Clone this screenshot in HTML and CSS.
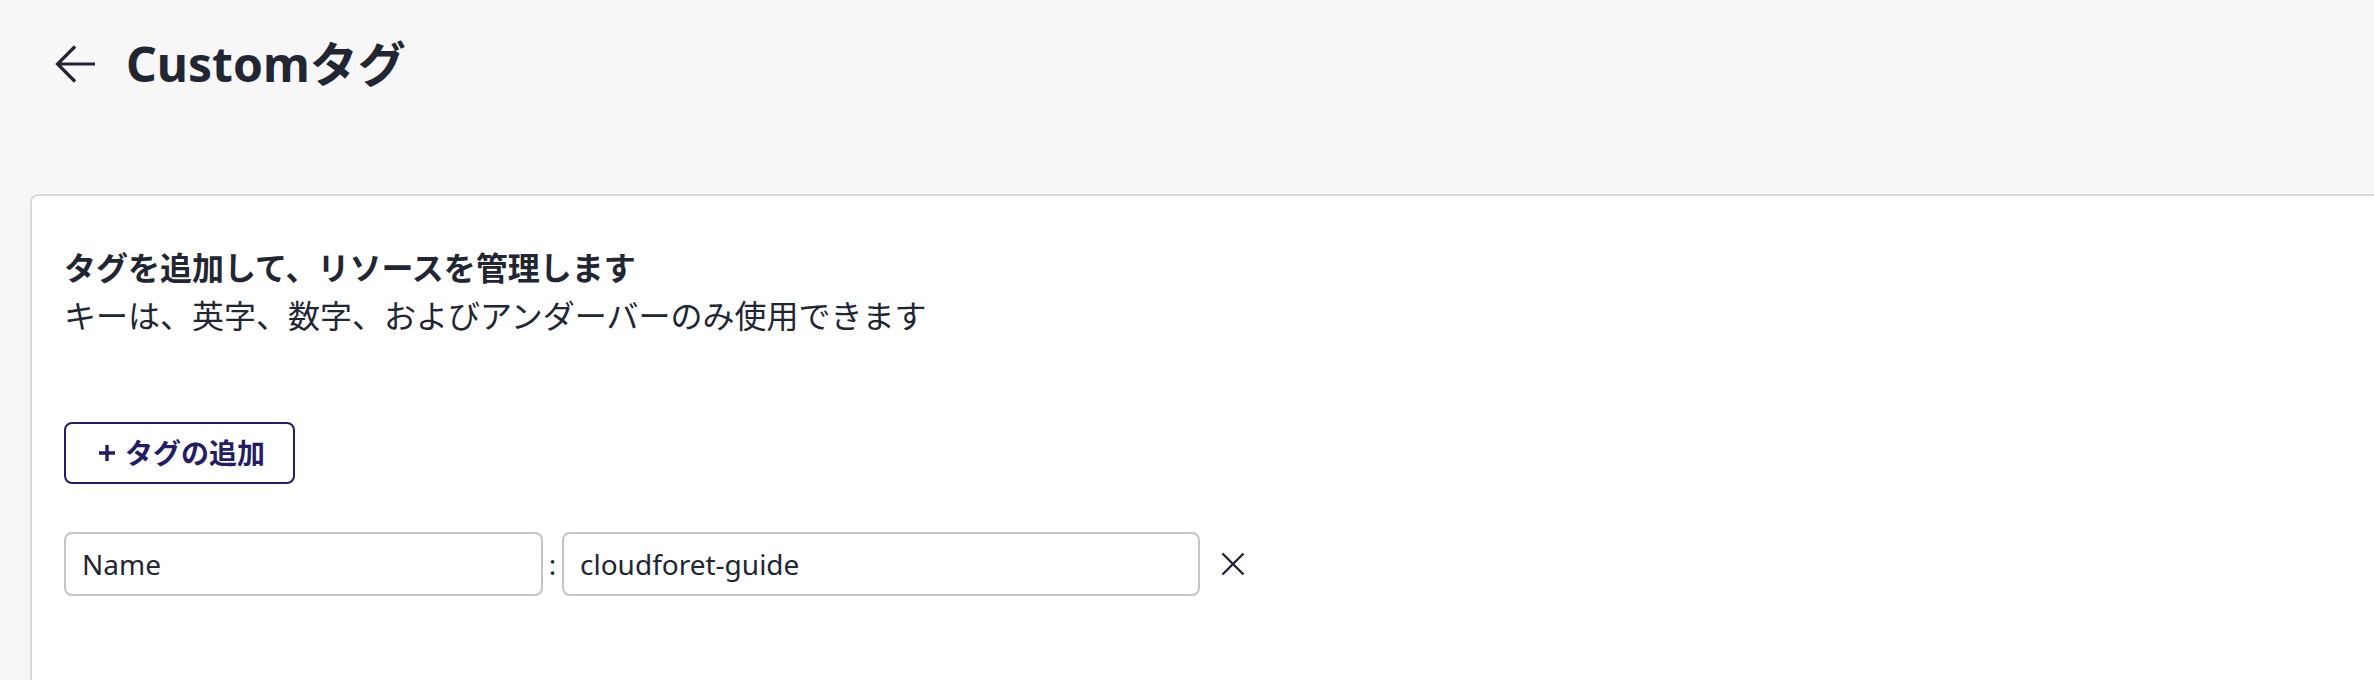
FILE: index.html
```html
<!DOCTYPE html>
<html lang="ja">
<head>
<meta charset="utf-8">
<title>Customタグ</title>
<link rel="stylesheet" href="styles.css">
</head>
<body>
<header class="page-header">
  <button class="back-btn" aria-label="戻る">
    <svg class="back-icon" width="44" height="40" viewBox="0 0 44 40">
      <path d="M2 20 H40 M20 2.5 L2.5 20 L20 37.5" fill="none" stroke="#222532" stroke-width="3.2"/>
    </svg>
  </button>
  <h1 class="page-title">Customタグ</h1>
</header>
<main class="card">
  <p class="help-title">タグを追加して、リソースを管理します</p>
  <p class="help-desc">キーは、英字、数字、およびアンダーバーのみ使用できます</p>
  <button class="add-btn">
    <svg class="plus-icon" width="16" height="16" viewBox="0 0 16 16">
      <path d="M8 0 V16 M0 8 H16" stroke="#251c64" stroke-width="3.4"/>
    </svg>
    <span>タグの追加</span>
  </button>
  <div class="tag-row">
    <input class="tag-input key" type="text" value="Name">
    <span class="colon">:</span>
    <input class="tag-input value" type="text" value="cloudforet-guide">
    <button class="delete-btn" aria-label="削除">
      <svg width="24" height="24" viewBox="0 0 24 24">
        <path d="M1.5 1.5 L22.5 22.5 M22.5 1.5 L1.5 22.5" stroke="#222532" stroke-width="2.4"/>
      </svg>
    </button>
  </div>
</main>
</body>
</html>
```

FILE: styles.css
```css
html, body {
  margin: 0;
  padding: 0;
  height: 100%;
  overflow: hidden;
}
body {
  background: #f7f7f7;
  font-family: "Noto Sans", "Noto Sans CJK JP", sans-serif;
  color: #222532;
}
.page-header {
  display: flex;
  align-items: center;
  height: 64px;
  padding: 32px 0 0 55px;
}
.back-btn {
  display: flex;
  align-items: center;
  padding: 0;
  margin: 0;
  border: none;
  background: none;
  cursor: pointer;
}
.back-icon {
  display: block;
}
.page-title {
  margin: 0 0 0 27px;
  font-size: 48px;
  font-weight: 700;
  line-height: 64px;
  color: #222532;
}
.card {
  margin: 98px -40px 0 30px;
  height: 800px;
  background: #ffffff;
  border-top: 2px solid #d9d9d9;
  border-left: 2px solid #d9d9d9;
  border-top-left-radius: 8px;
  padding: 48px 0 0 32px;
  box-sizing: border-box;
}
.help-title {
  margin: 0;
  font-size: 32px;
  font-weight: 700;
  line-height: 48px;
}
.help-desc {
  margin: 0 0 82px;
  font-size: 32px;
  font-weight: 400;
  line-height: 48px;
}
.add-btn {
  display: flex;
  align-items: center;
  height: 62px;
  padding: 0 28px 0 33px;
  border: 2px solid #251c64;
  border-radius: 8px;
  background: #ffffff;
  color: #251c64;
  font-family: "Noto Sans", "Noto Sans CJK JP", sans-serif;
  font-size: 28px;
  font-weight: 700;
  line-height: 1;
  cursor: pointer;
}
.plus-icon {
  display: block;
  margin-right: 10px;
}
.tag-row {
  display: flex;
  align-items: center;
  margin-top: 48px;
}
.tag-input {
  box-sizing: border-box;
  height: 64px;
  margin: 0;
  padding: 0 16px;
  border: 2px solid #c4c5ca;
  border-radius: 8px;
  background: #ffffff;
  color: #222532;
  font-family: "Noto Sans", "Noto Sans CJK JP", sans-serif;
  font-size: 28px;
  outline: none;
}
.tag-input.key {
  width: 479px;
}
.tag-input.value {
  width: 638px;
}
.colon {
  width: 19px;
  text-align: center;
  font-size: 28px;
  line-height: 1;
}
.delete-btn {
  display: flex;
  align-items: center;
  margin: 0 0 0 21px;
  padding: 0;
  border: none;
  background: none;
  cursor: pointer;
}
```
